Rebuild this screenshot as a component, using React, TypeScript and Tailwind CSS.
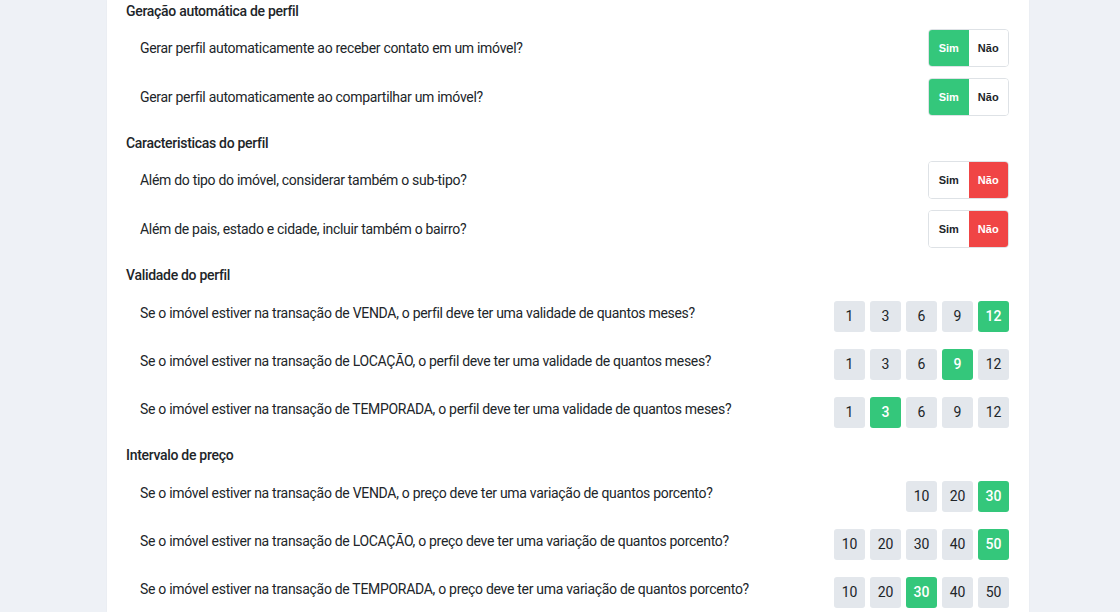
import React from 'react';

type Toggle = { label: string; value: boolean };
type Choice = { label: string; options: number[]; value: number };

const FONT = "font-['Roboto',_'Liberation_Sans',_sans-serif]";

const autoProfile: Toggle[] = [
  { label: 'Gerar perfil automaticamente ao receber contato em um imóvel?', value: true },
  { label: 'Gerar perfil automaticamente ao compartilhar um imóvel?', value: true },
];

const features: Toggle[] = [
  { label: 'Além do tipo do imóvel, considerar também o sub-tipo?', value: false },
  { label: 'Além de pais, estado e cidade, incluir também o bairro?', value: false },
];

const validity: Choice[] = [
  { label: 'Se o imóvel estiver na transação de VENDA, o perfil deve ter uma validade de quantos meses?', options: [1, 3, 6, 9, 12], value: 12 },
  { label: 'Se o imóvel estiver na transação de LOCAÇÃO, o perfil deve ter uma validade de quantos meses?', options: [1, 3, 6, 9, 12], value: 9 },
  { label: 'Se o imóvel estiver na transação de TEMPORADA, o perfil deve ter uma validade de quantos meses?', options: [1, 3, 6, 9, 12], value: 3 },
];

const priceRange: Choice[] = [
  { label: 'Se o imóvel estiver na transação de VENDA, o preço deve ter uma variação de quantos porcento?', options: [10, 20, 30], value: 30 },
  { label: 'Se o imóvel estiver na transação de LOCAÇÃO, o preço deve ter uma variação de quantos porcento?', options: [10, 20, 30, 40, 50], value: 50 },
  { label: 'Se o imóvel estiver na transação de TEMPORADA, o preço deve ter uma variação de quantos porcento?', options: [10, 20, 30, 40, 50], value: 30 },
];

function SectionTitle({ children, first }: { children: React.ReactNode; first?: boolean }) {
  return (
    <h2
      className={`${first ? '' : 'mt-[17px]'} h-[20px] text-[14px] leading-[20px] font-medium tracking-[-0.3px] text-[#212529]`}
    >
      {children}
    </h2>
  );
}

function YesNo({ value }: { value: boolean }) {
  return (
    <div className="flex h-[38px] w-[81px] rounded-[4px] border border-[#dee2e6] overflow-hidden font-['Liberation_Sans',_Arial,_sans-serif] text-[11px] font-bold">
      <span
        className={`flex-1 flex items-center justify-center ${
          value ? 'bg-[#34c77b] text-white' : 'bg-white text-[#212529]'
        }`}
      >
        Sim
      </span>
      <span
        className={`flex-1 flex items-center justify-center ${
          !value ? 'bg-[#f04545] text-white' : 'bg-white text-[#212529]'
        }`}
      >
        Não
      </span>
    </div>
  );
}

function ToggleRow({ item }: { item: Toggle }) {
  return (
    <div className="flex h-[38px] items-center justify-between pl-[14px]">
      <span className="text-[14px] tracking-[-0.3px] text-[#212529]">{item.label}</span>
      <YesNo value={item.value} />
    </div>
  );
}

function ChoiceRow({ item }: { item: Choice }) {
  return (
    <div className="flex h-[38px] items-center justify-between pl-[14px]">
      <span className="text-[14px] tracking-[-0.3px] text-[#212529]">{item.label}</span>
      <div className="flex gap-[5px] self-end">
        {item.options.map((o) => (
          <span
            key={o}
            className={`flex h-[31px] w-[31px] items-center justify-center rounded-[3px] text-[14px] ${
              o === item.value ? 'bg-[#34c77b] text-white font-medium' : 'bg-[#e3e7ec] text-[#212529]'
            }`}
          >
            {o}
          </span>
        ))}
      </div>
    </div>
  );
}

export default function App() {
  return (
    <div className={`min-h-screen h-[612px] overflow-hidden bg-[#eef1f6] ${FONT}`}>
      <div className="ml-[107px] w-[922px] h-full bg-white pl-[19px] pr-[20px] pt-px shadow-[0_0_2px_rgba(0,0,0,0.04)]">
        <SectionTitle first>Geração automática de perfil</SectionTitle>
        <div className="mt-2 flex flex-col gap-[11px]">
          {autoProfile.map((t) => (
            <ToggleRow key={t.label} item={t} />
          ))}
        </div>

        <div className="mt-[2px]">
          <SectionTitle>Caracteristicas do perfil</SectionTitle>
        </div>
        <div className="mt-2 flex flex-col gap-[11px]">
          {features.map((t) => (
            <ToggleRow key={t.label} item={t} />
          ))}
        </div>

        <div className="mt-[3px]">
          <SectionTitle>Validade do perfil</SectionTitle>
        </div>
        <div className="mt-[9px] flex flex-col gap-[10px]">
          {validity.map((c) => (
            <ChoiceRow key={c.label} item={c} />
          ))}
        </div>

        <SectionTitle>Intervalo de preço</SectionTitle>
        <div className="mt-[9px] flex flex-col gap-[10px]">
          {priceRange.map((c) => (
            <ChoiceRow key={c.label} item={c} />
          ))}
        </div>
      </div>
    </div>
  );
}
